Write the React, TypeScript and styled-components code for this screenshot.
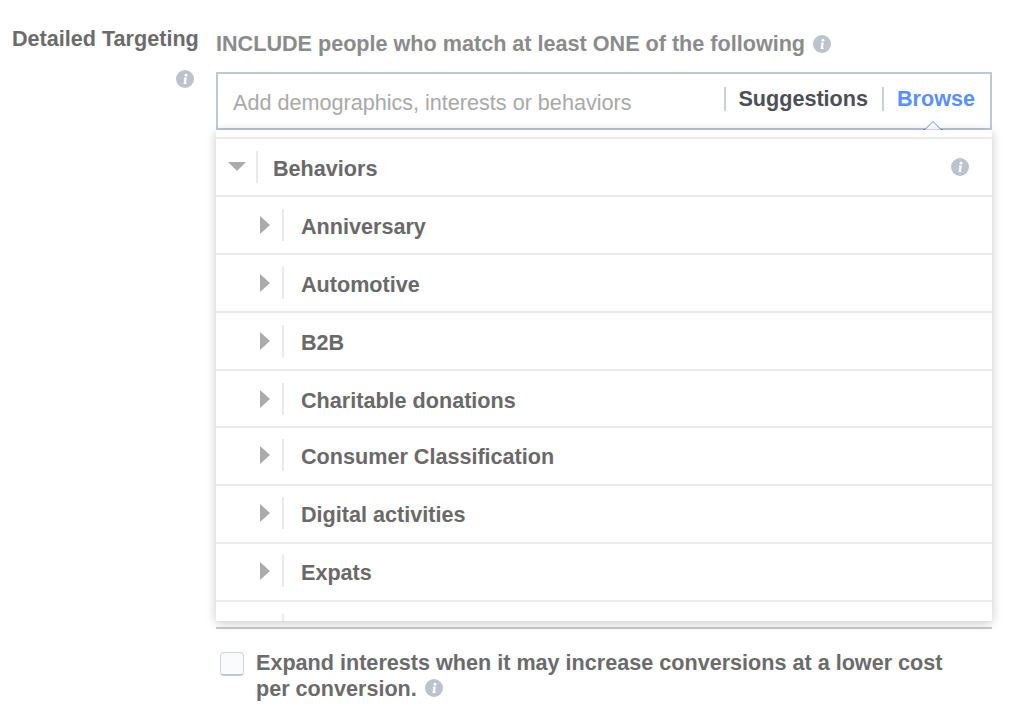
import styled, { createGlobalStyle } from 'styled-components';

const GlobalStyle = createGlobalStyle`
  html, body { margin: 0; padding: 0; background: #fff; }
  body { font-family: "Liberation Sans", Arial, sans-serif; }
`;

const Page = styled.main`
  display: grid;
  grid-template-columns: 204px 776px;
  width: 1030px;
  height: 724px;
  padding: 26px 0 0 12px;
  box-sizing: border-box;
  overflow: hidden;
`;

const LabelColumn = styled.div`
  display: flex;
  flex-direction: column;
  align-items: flex-end;
  padding-right: 22px;
  gap: 19px;
`;

const FieldLabel = styled.div`
  font-size: 21.6px;
  line-height: 25px;
  font-weight: 700;
  color: #6b6b6b;
  white-space: nowrap;
  align-self: flex-start;
`;

const Content = styled.div`
  display: flex;
  flex-direction: column;
`;

const IncludeLine = styled.div`
  display: flex;
  align-items: center;
  gap: 8px;
  height: 24px;
  margin-top: 6px;
  font-size: 21.6px;
  font-weight: 700;
  color: #8b8b8b;
  white-space: nowrap;
`;

const SearchBox = styled.div`
  display: flex;
  align-items: center;
  height: 58px;
  margin-top: 16px;
  box-sizing: border-box;
  border: 2px solid #bdc7d8;
  padding: 0 15px;
  position: relative;
`;

const Placeholder = styled.div`
  flex: 1;
  font-size: 21.6px;
  color: #a9a9a9;
  padding-top: 3px;
  white-space: nowrap;
`;

const SearchTab = styled.div<{ $active?: boolean }>`
  font-size: 21.6px;
  font-weight: 700;
  color: ${({ $active }) => ($active ? '#5890ff' : '#4b4f56')};
  border-left: 2px solid #c9d1de;
  line-height: 24px;
  padding-left: ${({ $active }) => ($active ? 13 : 12)}px;
  margin-left: ${({ $active }) => ($active ? '14px' : '0')};
  margin-bottom: 4px;
`;

const Caret = styled.svg`
  position: absolute;
  right: 47px;
  bottom: -2px;
  display: block;
`;

const Panel = styled.div`
  height: 491px;
  overflow: hidden;
  background: #fff;
  box-shadow: 0 2px 10px rgba(0, 0, 0, 0.22);
  padding-top: 7px;
  box-sizing: border-box;
  position: relative;
  z-index: 1;
`;

const TreeRow = styled.div<{ $depth: number; $height?: number; $raised?: boolean }>`
  display: flex;
  align-items: center;
  height: ${({ $height }) => $height ?? 58}px;
  box-sizing: border-box;
  border-top: 2px solid #e9eaed;
  padding-left: ${({ $depth }) => ($depth ? 44 : 12)}px;
  padding-right: 23px;
  padding-bottom: ${({ $raised }) => ($raised ? 2 : 0)}px;
`;

const Arrow = styled.svg<{ $wide?: boolean }>`
  display: block;
  flex: none;
  width: ${({ $wide }) => ($wide ? 18 : 12)}px;
  height: 18px;
`;

const RowDivider = styled.span<{ $gap: number }>`
  display: block;
  flex: none;
  width: 2px;
  height: 32px;
  margin: 0 ${({ $gap }) => $gap}px 0 10px;
  background: #e9eaed;
`;

const RowLabel = styled.span`
  flex: 1;
  padding-top: 4px;
  font-size: 21.6px;
  font-weight: 700;
  color: #696969;
  white-space: nowrap;
`;

const BottomRule = styled.div`
  height: 2px;
  margin-top: 6px;
  background: #c9c9c9;
`;

const ExpandRow = styled.div`
  display: flex;
  gap: 12px;
  margin-top: 21px;
  padding-left: 4px;
`;

const Checkbox = styled.span`
  display: block;
  flex: none;
  width: 24px;
  height: 24px;
  margin-top: 2px;
  box-sizing: border-box;
  border: 1px solid #d3d5d9;
  border-bottom: 2px solid #c3c6cb;
  border-radius: 4px;
  background: #fafbfc;
`;

const ExpandText = styled.div`
  width: 710px;
  font-size: 21.6px;
  line-height: 26px;
  font-weight: 700;
  color: #6b6b6b;
`;

const InlineInfo = styled.span`
  display: inline-block;
  vertical-align: -1px;
  margin-left: 8px;
`;

const InfoSvg = styled.svg`
  display: block;
  flex: none;
`;

function InfoIcon({ color = '#bcc3cf' }: { color?: string }) {
  return (
    <InfoSvg width="18" height="18" viewBox="0 0 18 18">
      <circle cx="9" cy="9" r="9" fill={color} />
      <path d="M8.4 7.6h2.5l-1 5h.9l-.3 1.3H7.4l1-5h-.8z" fill="#fff" />
      <circle cx="10" cy="5.2" r="1.4" fill="#fff" />
    </InfoSvg>
  );
}

const categories: { name: string; height?: number; raised?: boolean }[] = [
  { name: 'Anniversary' },
  { name: 'Automotive' },
  { name: 'B2B' },
  { name: 'Charitable donations', height: 57 },
  { name: 'Consumer Classification', raised: true },
  { name: 'Digital activities', raised: true },
  { name: 'Expats', raised: true },
];

export default function App() {
  return (
    <>
      <GlobalStyle />
      <Page>
        <LabelColumn>
          <FieldLabel>Detailed Targeting</FieldLabel>
          <InfoIcon />
        </LabelColumn>
        <Content>
          <IncludeLine>
            INCLUDE people who match at least ONE of the following
            <InfoIcon />
          </IncludeLine>
          <SearchBox>
            <Placeholder>Add demographics, interests or behaviors</Placeholder>
            <SearchTab>Suggestions</SearchTab>
            <SearchTab $active>Browse</SearchTab>
            <Caret width="20" height="10" viewBox="0 0 20 10">
              <path d="M0 9.5h2L10 1.5l8 8h2" fill="#fff" stroke="#5890ff" strokeWidth="1" />
            </Caret>
          </SearchBox>
          <Panel>
            <TreeRow $depth={0}>
              <Arrow $wide viewBox="0 0 18 18">
                <path d="M0 4h18L9 13z" fill="#ababab" />
              </Arrow>
              <RowDivider $gap={15} />
              <RowLabel>Behaviors</RowLabel>
              <InfoIcon />
            </TreeRow>
            {categories.map((c) => (
              <TreeRow key={c.name} $depth={1} $height={c.height} $raised={c.raised}>
                <Arrow viewBox="0 0 12 18">
                  <path d="M0 0l10 9-10 9z" fill="#ababab" />
                </Arrow>
                <RowDivider $gap={17} />
                <RowLabel>{c.name}</RowLabel>
              </TreeRow>
            ))}
            <TreeRow $depth={1}>
              <Arrow viewBox="0 0 12 18" />
              <RowDivider $gap={17} />
            </TreeRow>
          </Panel>
          <BottomRule />
          <ExpandRow>
            <Checkbox />
            <ExpandText>
              Expand interests when it may increase conversions at a lower cost per conversion.
              <InlineInfo>
                <InfoIcon />
              </InlineInfo>
            </ExpandText>
          </ExpandRow>
        </Content>
      </Page>
    </>
  );
}
